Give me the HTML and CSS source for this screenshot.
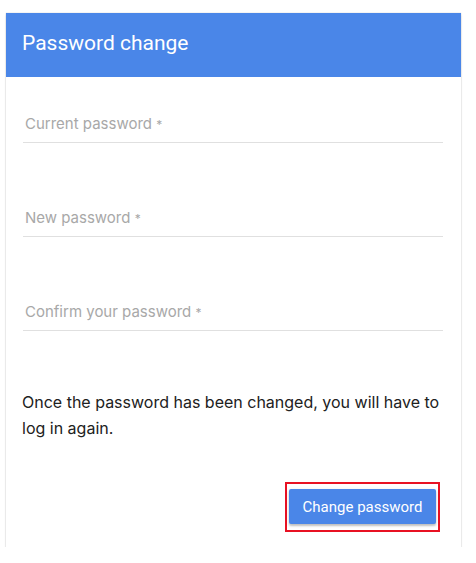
FILE: index.html
```html
<!DOCTYPE html>
<html>
<head>
<meta charset="utf-8">
<link rel="stylesheet" href="styles.css">
</head>
<body>
<div class="card">
  <div class="card-header">Password change</div>
  <div class="card-body">
    <div class="field"><span class="label">Current password <span class="req">*</span></span></div>
    <div class="field"><span class="label">New password <span class="req">*</span></span></div>
    <div class="field"><span class="label">Confirm your password <span class="req">*</span></span></div>
    <p class="note">Once the password has been changed, you will have to log in again.</p>
    <div class="actions">
      <div class="highlight"><button class="btn">Change password</button></div>
    </div>
  </div>
</div>
</body>
</html>
```
FILE: styles.css
```css
html, body {
  margin: 0;
  padding: 0;
  background: #ffffff;
}
body {
  font-family: Inter, Roboto, "Liberation Sans", sans-serif;
}
.card {
  margin: 13px 0 0 6px;
  width: 455px;
  background: #fff;
  box-shadow: 0 1px 0 #c2c2c2, 0 2px 2px rgba(0,0,0,0.12), 0 0 1px rgba(0,0,0,0.25);
}
.card-header {
  box-sizing: border-box;
  height: 64px;
  padding: 18px 16px 0 16px;
  background: #4a86e8;
  color: #fff;
  font-family: Roboto, "Liberation Sans", sans-serif;
  font-size: 21px;
  line-height: 24px;
  font-weight: 400;
}
.card-body {
  padding: 0 18px 15px 16px;
}
.field {
  margin-left: 1px;
  padding: 37px 0 8px 2px;
  border-bottom: 1px solid #e0e0e0;
}
.field + .field {
  margin-top: 28px;
}
.label {
  display: block;
  height: 20px;
  font-size: 15px;
  line-height: 20px;
  color: #a8a8a8;
}
.req {
  font-size: 12px;
  line-height: 0;
}
.note {
  margin: 58px 0 0 0;
  font-size: 16px;
  line-height: 26px;
  color: #212121;
}
.actions {
  margin-top: 41px;
  display: flex;
  justify-content: flex-end;
  padding-right: 3px;
}
.highlight {
  border: 2px solid #e81123;
  padding: 5px 2px 6px 2px;
  display: flex;
}
.btn {
  width: 147px;
  height: 35px;
  border: none;
  border-radius: 2px;
  background: #4a86e8;
  color: #fff;
  font-family: Roboto, "Liberation Sans", sans-serif;
  font-size: 15px;
  padding: 0;
  box-shadow: 0 2px 2px rgba(0,0,0,0.2), 0 1px 4px rgba(0,0,0,0.1);
}
```
